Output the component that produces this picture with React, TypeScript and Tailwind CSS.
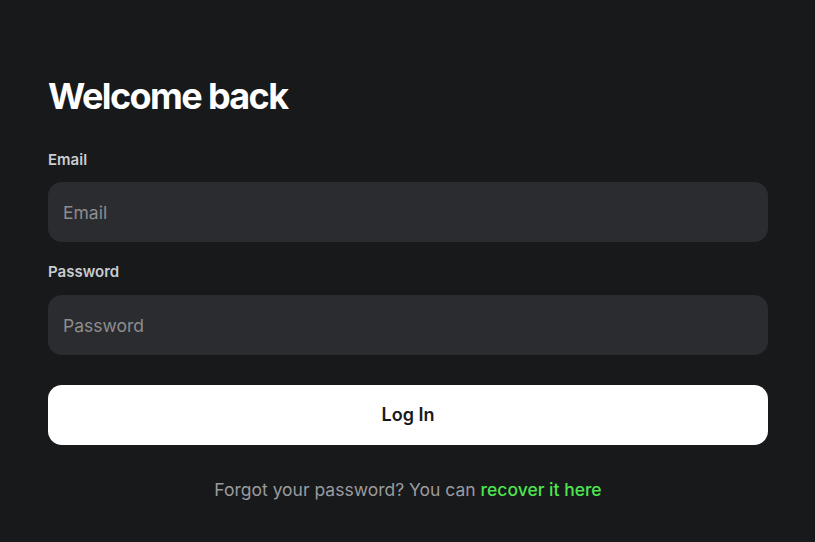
import React, { useState } from "react";

const App: React.FC = () => {
  const [email, setEmail] = useState("");
  const [password, setPassword] = useState("");

  return (
    <div
      className="min-h-screen w-full bg-[#18191b] px-12 pt-[76px]"
      style={{ fontFamily: "Inter, 'Noto Sans', sans-serif" }}
    >
      <div className="w-[720px]">
        <h1 className="text-4xl font-bold leading-10 tracking-[-0.045em] text-white">
          Welcome back
        </h1>

        <form className="mt-[34px] flex flex-col" onSubmit={(e) => e.preventDefault()}>
          <label className="text-[15px] font-semibold leading-5 text-[#c9ccd1]">Email</label>
          <input
            type="email"
            value={email}
            onChange={(e) => setEmail(e.target.value)}
            placeholder="Email"
            className="mt-3 h-[60px] w-full rounded-[14px] bg-[#2b2c2f] px-[15px] text-[17.5px] text-white placeholder:text-[#8c8d90] focus:outline-none"
          />

          <label className="mt-5 text-[15px] font-semibold leading-5 text-[#c9ccd1]">
            Password
          </label>
          <input
            type="password"
            value={password}
            onChange={(e) => setPassword(e.target.value)}
            placeholder="Password"
            className="mt-[13px] h-[60px] w-full rounded-[14px] bg-[#2b2c2f] px-[15px] text-[17.5px] text-white placeholder:text-[#8c8d90] focus:outline-none"
          />

          <button
            type="submit"
            className="mt-[30px] h-[60px] w-full rounded-[14px] bg-white text-lg font-semibold text-[#18191b]"
          >
            Log In
          </button>
        </form>

        <p className="mt-[31px] text-center text-[17.5px] leading-7 text-[#9a9b9e]">
          Forgot your password? You can{" "}
          <a href="#" className="font-medium text-[#4ee44e]">
            recover it here
          </a>
        </p>
      </div>
    </div>
  );
};

export default App;
